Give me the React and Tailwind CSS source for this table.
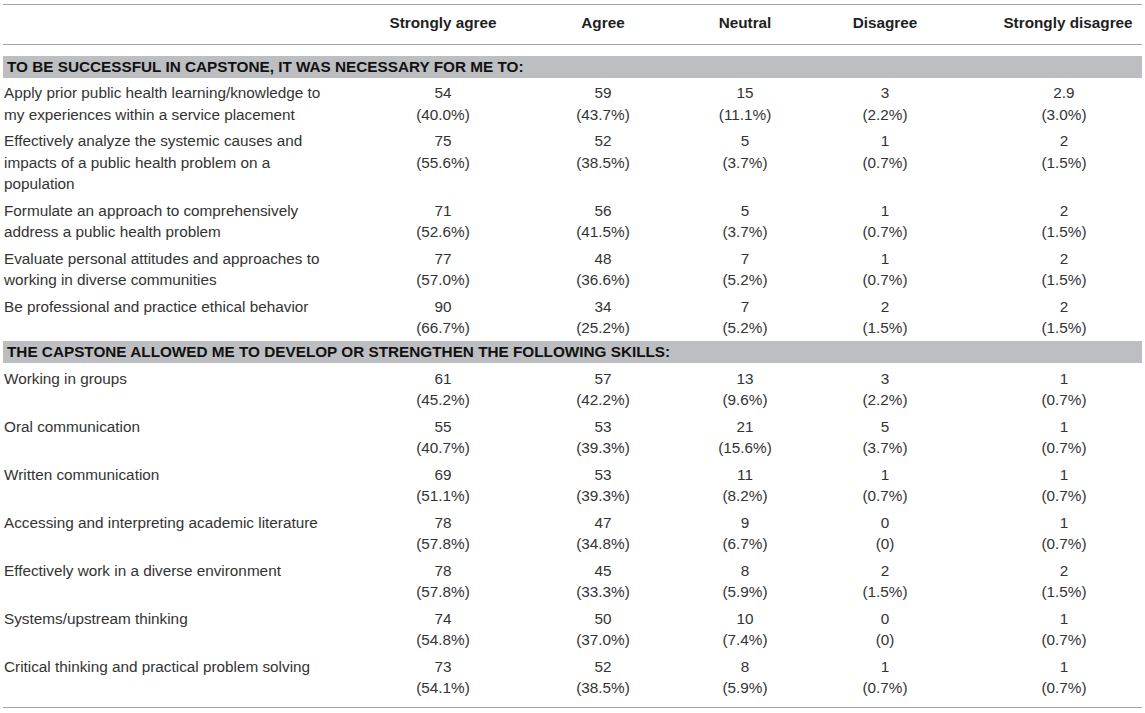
import React from 'react';

const cols = 'grid grid-cols-[360px_160px_160px_124px_156px_179px]';

const sections = [
  {
    title: 'TO BE SUCCESSFUL IN CAPSTONE, IT WAS NECESSARY FOR ME TO:',
    rows: [
      [['Apply prior public health learning/knowledge to', 'my experiences within a service placement'], ['54', '40.0%'], ['59', '43.7%'], ['15', '11.1%'], ['3', '2.2%'], ['2.9', '3.0%']],
      [['Effectively analyze the systemic causes and', 'impacts of a public health problem on a', 'population'], ['75', '55.6%'], ['52', '38.5%'], ['5', '3.7%'], ['1', '0.7%'], ['2', '1.5%']],
      [['Formulate an approach to comprehensively', 'address a public health problem'], ['71', '52.6%'], ['56', '41.5%'], ['5', '3.7%'], ['1', '0.7%'], ['2', '1.5%']],
      [['Evaluate personal attitudes and approaches to', 'working in diverse communities'], ['77', '57.0%'], ['48', '36.6%'], ['7', '5.2%'], ['1', '0.7%'], ['2', '1.5%']],
      [['Be professional and practice ethical behavior'], ['90', '66.7%'], ['34', '25.2%'], ['7', '5.2%'], ['2', '1.5%'], ['2', '1.5%']],
    ],
  },
  {
    title: 'THE CAPSTONE ALLOWED ME TO DEVELOP OR STRENGTHEN THE FOLLOWING SKILLS:',
    rows: [
      [['Working in groups'], ['61', '45.2%'], ['57', '42.2%'], ['13', '9.6%'], ['3', '2.2%'], ['1', '0.7%']],
      [['Oral communication'], ['55', '40.7%'], ['53', '39.3%'], ['21', '15.6%'], ['5', '3.7%'], ['1', '0.7%']],
      [['Written communication'], ['69', '51.1%'], ['53', '39.3%'], ['11', '8.2%'], ['1', '0.7%'], ['1', '0.7%']],
      [['Accessing and interpreting academic literature'], ['78', '57.8%'], ['47', '34.8%'], ['9', '6.7%'], ['0', '0'], ['1', '0.7%']],
      [['Effectively work in a diverse environment'], ['78', '57.8%'], ['45', '33.3%'], ['8', '5.9%'], ['2', '1.5%'], ['2', '1.5%']],
      [['Systems/upstream thinking'], ['74', '54.8%'], ['50', '37.0%'], ['10', '7.4%'], ['0', '0'], ['1', '0.7%']],
      [['Critical thinking and practical problem solving'], ['73', '54.1%'], ['52', '38.5%'], ['8', '5.9%'], ['1', '0.7%'], ['1', '0.7%']],
    ],
  },
];

const headers = ['Strongly agree', 'Agree', 'Neutral', 'Disagree', 'Strongly disagree'];

function Cell({ value, last }) {
  return (
    <div className={`text-center ${last ? 'pl-[23px]' : ''}`}>
      <div>{value[0]}</div>
      <div>({value[1]})</div>
    </div>
  );
}

export default function App() {
  return (
    <div className="bg-white w-[1145px] h-[713px] overflow-hidden font-['Liberation_Sans',Arial,sans-serif] text-[15.3px] text-[#333]">
      <div className="ml-[3px] w-[1139px] mt-[4px] border-t border-b border-[#a3a3a3] pb-[8px]">
        <div className={`${cols} border-b border-[#a3a3a3] pt-[7px] pb-[11px] leading-[21px] font-bold text-[#1f1f1f]`}>
          <div />
          {headers.map((h, i) => (
            <div key={h} className={`text-center ${i === 4 ? 'pl-[31px]' : ''}`}>{h}</div>
          ))}
        </div>
        {sections.map((s, si) => (
          <div key={s.title}>
            <div className={`${si === 0 ? 'mt-[11px]' : 'mt-px'} h-[22px] bg-[#bdbec1] pl-[4px] leading-[22px] font-bold text-[#111]`}>
              {s.title}
            </div>
            {s.rows.map((r, ri) => (
              <div key={ri} className={`${cols} ${si === 0 ? 'pt-[4px] pb-px' : 'pt-[5px] pb-0'} leading-[21.5px]`}>
                <div className="pl-px">
                  {r[0].map((l) => (
                    <div key={l}>{l}</div>
                  ))}
                </div>
                {r.slice(1).map((v, ci) => (
                  <Cell key={ci} value={v} last={ci === 4} />
                ))}
              </div>
            ))}
          </div>
        ))}
      </div>
    </div>
  );
}
